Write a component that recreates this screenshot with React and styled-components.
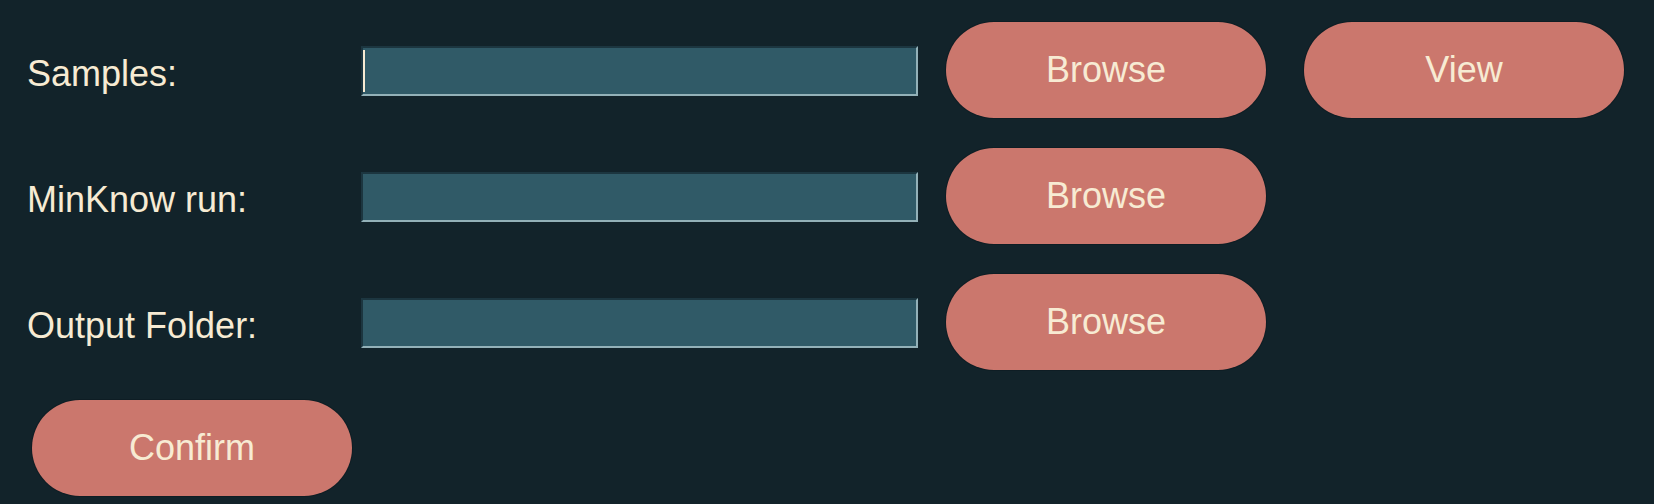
import React from 'react';
import styled, { createGlobalStyle } from 'styled-components';

const GlobalStyle = createGlobalStyle`
  html, body {
    margin: 0;
    height: 100%;
    background: #12232a;
  }
  #root {
    min-height: 100%;
  }
`;

const Window = styled.div`
  display: flex;
  flex-direction: column;
  gap: 30px;
  padding: 22px 0 0 27px;
  font-family: 'Liberation Sans', Arial, sans-serif;
  color: #f7ebd3;
`;

const Row = styled.div`
  display: flex;
  align-items: center;
  height: 96px;
`;

const Label = styled.div`
  width: 334px;
  font-size: 36px;
  line-height: 1;
  padding-top: 7px;
`;

const Field = styled.div`
  display: flex;
  align-items: center;
  box-sizing: border-box;
  width: 557px;
  height: 50px;
  margin: 2px 28px 0 0;
  background: #305a67;
  border: 2px solid;
  border-color: #1c3640 #93b1b8 #93b1b8 #1c3640;
`;

const Caret = styled.span`
  width: 2px;
  height: 42px;
  background: #f7ebd3;
`;

const Button = styled.button`
  box-sizing: border-box;
  width: 320px;
  height: 96px;
  margin-left: ${(p) => p.$offset || 0}px;
  border: none;
  border-radius: 48px;
  background: #cb776d;
  box-shadow: 0 0 0 1px rgba(10, 20, 25, 0.35);
  color: #f7ebd3;
  font-family: inherit;
  font-size: 36px;
  line-height: 1;
  padding: 0;
  cursor: pointer;
`;

const rows = [
  { label: 'Samples:', focused: true, view: true },
  { label: 'MinKnow run:' },
  { label: 'Output Folder:' },
];

export default function App() {
  return (
    <>
      <GlobalStyle />
      <Window>
        {rows.map((row) => (
          <Row key={row.label}>
            <Label>{row.label}</Label>
            <Field>{row.focused && <Caret />}</Field>
            <Button>Browse</Button>
            {row.view && <Button $offset={38}>View</Button>}
          </Row>
        ))}
        <Row>
          <Button $offset={5}>Confirm</Button>
        </Row>
      </Window>
    </>
  );
}
